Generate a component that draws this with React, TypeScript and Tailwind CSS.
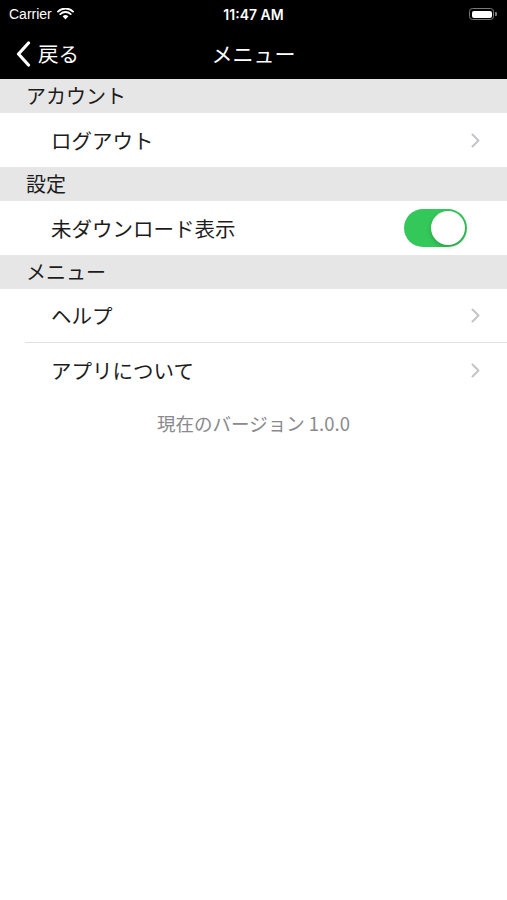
import React from "react";

const jp = { fontFamily: '"Noto Sans CJK JP", "Noto Sans", sans-serif' };

function Chevron() {
  return (
    <svg width="9" height="15" viewBox="0 0 9 15" className="shrink-0">
      <path d="M1.5 1.5 L7.5 7.5 L1.5 13.5" fill="none" stroke="#c4c4c9" strokeWidth="2" strokeLinecap="round" strokeLinejoin="round" />
    </svg>
  );
}

function Header({ title }: { title: string }) {
  return (
    <div className="h-[34px] bg-[#e6e6e6] flex items-center pl-[26px] text-[20px] text-[#1c1c1c]" style={jp}>
      {title}
    </div>
  );
}

function Row({ title, children, sep }: { title: string; children?: React.ReactNode; sep?: boolean }) {
  return (
    <div className="bg-white pl-[25px]">
      <div className={`h-[54px] flex items-center pr-[27px] ${sep ? "border-b border-[#e0e0e0]" : ""}`}>
        <span className="pl-[26px] flex-1 text-[20.5px] text-[#1c1c1c]" style={jp}>{title}</span>
        {children}
      </div>
    </div>
  );
}

export default function App() {
  return (
    <div className="w-[507px] h-[900px] bg-white overflow-hidden">
      <div className="bg-black h-[79px] text-white">
        <div className="h-[28px] flex items-center px-[9px] relative">
          <div className="flex items-center gap-[5px]">
            <span className="text-[14px]" style={{ fontFamily: '"Liberation Sans", Arial, sans-serif' }}>Carrier</span>
            <svg width="17" height="12" viewBox="0 0 17 12">
              <path d="M8.5 11.5 L5.6 8.3 A4.2 4.2 0 0 1 11.4 8.3 Z" fill="white" />
              <path d="M3.3 6.1 A7.5 7.5 0 0 1 13.7 6.1" fill="none" stroke="white" strokeWidth="1.9" strokeLinecap="round" />
              <path d="M1 3.6 A10.8 10.8 0 0 1 16 3.6" fill="none" stroke="white" strokeWidth="1.9" strokeLinecap="round" />
            </svg>
          </div>
          <div className="absolute left-0 right-0 text-center text-[14px] font-semibold" style={{ fontFamily: 'Inter, "Liberation Sans", sans-serif' }}>
            11:47 AM
          </div>
          <div className="ml-auto flex items-center mr-[1px]">
            <div className="w-[25px] h-[12px] rounded-[3.5px] border border-[#7a7a7a] p-[1.5px]">
              <div className="w-full h-full bg-white rounded-[2px]" />
            </div>
            <div className="w-[2px] h-[4px] bg-[#7a7a7a] rounded-r-[1px] ml-[1px]" />
          </div>
        </div>
        <div className="h-[51px] flex items-center relative">
          <div className="flex items-center pl-[15px] gap-[7px]">
            <svg width="16" height="26" viewBox="0 0 16 26">
              <path d="M13.5 2 L3.5 13 L13.5 24" fill="none" stroke="white" strokeWidth="3.2" strokeLinecap="round" strokeLinejoin="round" />
            </svg>
            <span className="text-[20.5px]" style={jp}>戻る</span>
          </div>
          <div className="absolute left-0 right-0 text-center text-[21px] pointer-events-none" style={jp}>
            メニュー
          </div>
        </div>
      </div>
      <Header title="アカウント" />
      <Row title="ログアウト">
        <Chevron />
      </Row>
      <Header title="設定" />
      <Row title="未ダウンロード表示">
        <div className="w-[63px] h-[38px] rounded-full bg-[#34c759] flex items-center justify-end pr-[2px] mr-[13px]">
          <div className="w-[34px] h-[34px] rounded-full bg-white shadow-[0_2px_4px_rgba(0,0,0,0.2)]" />
        </div>
      </Row>
      <Header title="メニュー" />
      <Row title="ヘルプ" sep>
        <Chevron />
      </Row>
      <Row title="アプリについて">
        <Chevron />
      </Row>
      <div className="text-center text-[18.5px] text-[#8a8a8e] mt-[13px]" style={jp}>
        現在のバージョン 1.0.0
      </div>
    </div>
  );
}
